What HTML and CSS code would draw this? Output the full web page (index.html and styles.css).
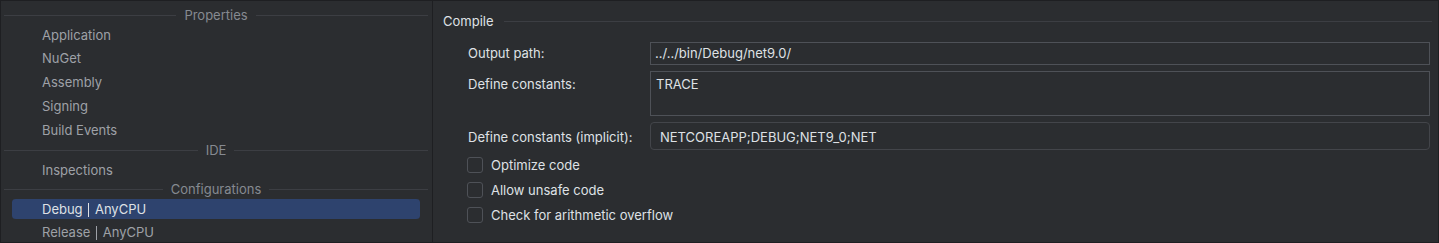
FILE: index.html
```html
<!DOCTYPE html>
<html lang="en">
<head>
  <meta charset="UTF-8">
  <title>Project Properties</title>
  <link rel="stylesheet" href="styles.css">
</head>
<body>
  <div class="window">
    <div class="nav">
      <div class="title"><span>Properties</span></div>
      <div class="item">Application</div>
      <div class="item">NuGet</div>
      <div class="item">Assembly</div>
      <div class="item">Signing</div>
      <div class="item">Build Events</div>
      <div class="title"><span>IDE</span></div>
      <div class="item">Inspections</div>
      <div class="title"><span>Configurations</span></div>
      <div class="item selected">Debug <span class="bar"></span> AnyCPU</div>
      <div class="item">Release <span class="bar"></span> AnyCPU</div>
    </div>

    <div class="content">
      <div class="group">
        <span>Compile</span>
      </div>

      <div class="form">
        <label>Output path:</label>
        <div class="field">../../bin/Debug/net9.0/</div>

        <label>Define constants:</label>
        <div class="field area">TRACE</div>

        <label>Define constants (implicit):</label>
        <div class="field readonly">NETCOREAPP;DEBUG;NET9_0;NET</div>
      </div>

      <div class="checks">
        <div class="check"><span class="box"></span>Optimize code</div>
        <div class="check"><span class="box"></span>Allow unsafe code</div>
        <div class="check"><span class="box"></span>Check for arithmetic overflow</div>
      </div>
    </div>
  </div>
</body>
</html>
```

FILE: styles.css
```css
* {
  box-sizing: border-box;
}

body {
  margin: 0;
  background: #2b2d30;
  font-family: Inter, "Noto Sans", sans-serif;
  font-size: 13px;
  color: #dfe1e5;
}

.window {
  display: flex;
  height: 243px;
  border: 1px solid #1e1f22;
  background: #2b2d30;
}

/* left list */
.nav {
  width: 432px;
  flex-shrink: 0;
  padding-top: 6px;
  border-right: 1px solid #1e1f22;
}

.title {
  display: flex;
  align-items: center;
  gap: 8px;
  height: 17px;
  line-height: 17px;
  padding: 0 4px 0 3px;
  color: #868a91;
}

.title::before,
.title::after {
  content: "";
  flex: 1;
  height: 1px;
  background: #3c3e43;
}

.item {
  height: 24px;
  line-height: 24px;
  margin: 0 12px 0 11px;
  padding-left: 30px;
  border-radius: 4px;
  color: #9ea1a7;
  white-space: nowrap;
}

.title + .item {
  height: 22px;
  line-height: 22px;
}

.item.selected {
  line-height: 20px;
  border-top: 1px solid transparent;
  border-bottom: 1px solid transparent;
  background: #2e436e;
  background-clip: padding-box;
  color: #dfe1e5;
}

.bar {
  display: inline-block;
  width: 1px;
  height: 14px;
  margin: 0 2px;
  vertical-align: -3px;
  background: currentColor;
}

/* right side */
.content {
  flex: 1;
  padding: 10px 6px 0 0;
}

.group {
  display: flex;
  align-items: center;
  gap: 10px;
  height: 20px;
  line-height: 20px;
  padding-left: 10px;
}

.group::after {
  content: "";
  flex: 1;
  height: 1px;
  background: #3c3e43;
}

.form {
  display: grid;
  grid-template-columns: 182px 1fr;
  row-gap: 6px;
  align-items: baseline;
  margin-top: 11px;
  padding: 0 2px 0 35px;
}

.field {
  height: 23px;
  line-height: 21px;
  padding: 0 4px;
  border: 1px solid #4e5157;
  color: #dfe1e5;
}

.field.area {
  height: 45px;
  padding: 2px 5px 0;
}

.field.readonly {
  height: 28px;
  padding: 4px 9px 0;
  border-color: #43454a;
  border-radius: 4px;
}

.checks {
  display: flex;
  flex-direction: column;
  gap: 9px;
  margin-top: 7px;
  padding-left: 34px;
}

.check {
  display: flex;
  align-items: center;
  gap: 8px;
  height: 16px;
  line-height: 16px;
}

.box {
  width: 16px;
  height: 16px;
  border: 1px solid #4e5157;
  border-radius: 3px;
}
```
